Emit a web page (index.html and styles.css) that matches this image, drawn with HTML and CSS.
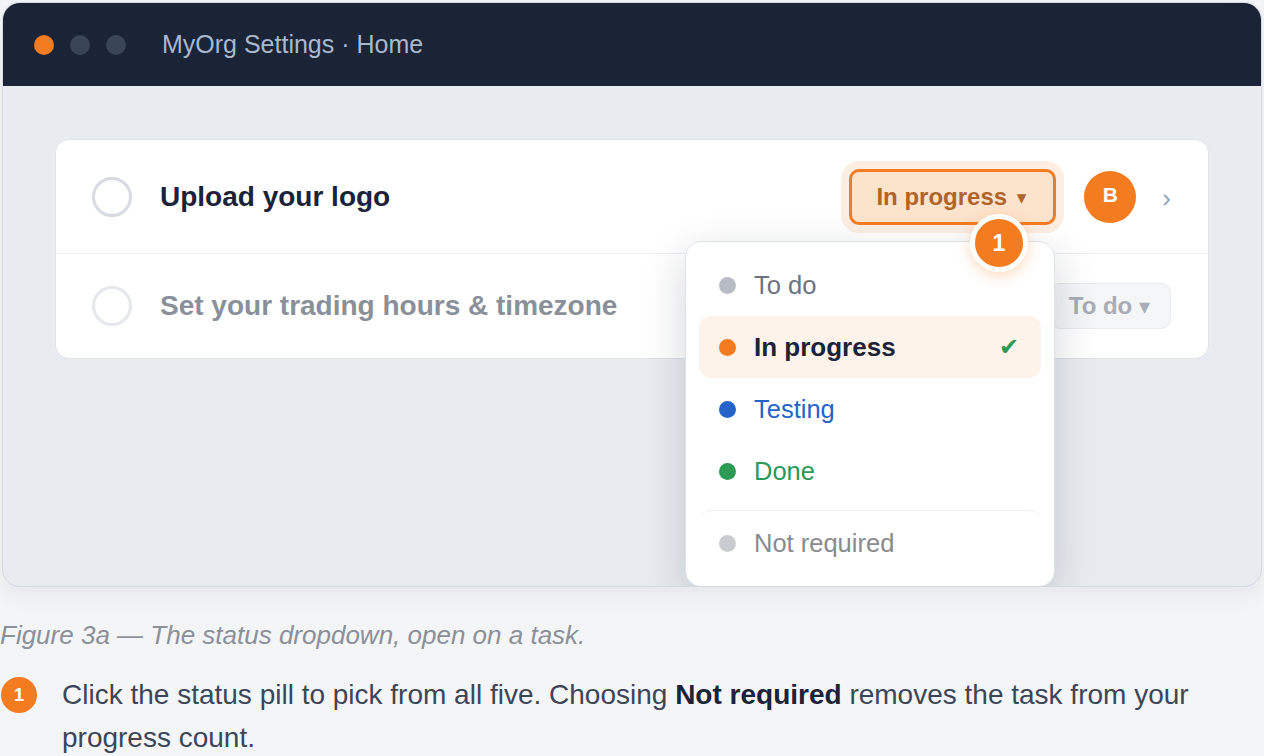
FILE: index.html
```html
<!DOCTYPE html>
<html lang="en">
<head>
<meta charset="utf-8">
<title>Status dropdown</title>
<link rel="stylesheet" href="styles.css">
</head>
<body>
<div class="window">
  <div class="titlebar">
    <span class="light light-orange"></span>
    <span class="light"></span>
    <span class="light"></span>
    <span class="title">MyOrg Settings · Home</span>
  </div>
  <div class="content">
    <div class="card">
      <div class="row row-active">
        <span class="check"></span>
        <span class="task">Upload your logo</span>
        <span class="pill-wrap">
          <span class="pill">In progress <span class="caret">▾</span></span>
        </span>
        <span class="avatar">B</span>
        <span class="chev">›</span>
      </div>
      <div class="row row-muted">
        <span class="check check-muted"></span>
        <span class="task task-muted">Set your trading hours &amp; timezone</span>
        <span class="pill-todo">To do <span class="caret-todo">▾</span></span>
      </div>

      <div class="dropdown">
        <div class="opt opt-todo"><span class="dot dot-gray"></span>To do</div>
        <div class="opt opt-active"><span class="dot dot-orange"></span>In progress<span class="tick">✔</span></div>
        <div class="opt opt-testing"><span class="dot dot-blue"></span>Testing</div>
        <div class="opt opt-done"><span class="dot dot-green"></span>Done</div>
        <div class="opt opt-nr"><span class="dot dot-light"></span>Not required</div>
      </div>
      <span class="marker">1</span>
    </div>
  </div>
</div>
<p class="caption">Figure 3a — The status dropdown, open on a task.</p>
<div class="note">
  <span class="note-badge">1</span>
  <p class="note-text"><span class="line">Click the status pill to pick from all five. Choosing <strong>Not required</strong> removes the task from your</span><span class="line">progress count.</span></p>
</div>
</body>
</html>
```

FILE: styles.css
```css
* { box-sizing: border-box; }
html, body { margin: 0; padding: 0; }
body {
  background: #f4f5f7;
  font-family: "Liberation Sans", Arial, sans-serif;
  width: 1264px;
  height: 756px;
  overflow: hidden;
}

.window {
  margin: 2px 2px 0;
  height: 585px;
  border: 1px solid #d4dae2;
  border-radius: 18px;
  overflow: hidden;
  background: #e8ecf0;
  box-shadow: 0 8px 22px rgba(30, 40, 60, 0.07);
}

.titlebar {
  height: 83px;
  background: #1b2337;
  display: flex;
  align-items: center;
  padding-left: 31px;
  gap: 16px;
}
.light {
  width: 20px;
  height: 20px;
  border-radius: 50%;
  background: #3a4558;
}
.light-orange { background: #f47c20; }
.title {
  margin-left: 20px;
  color: #a9b8cc;
  font-size: 25px;
}

.content {
  padding: 53px 52px 0;
}

.card {
  position: relative;
  background: #fff;
  border: 1px solid #dee3e9;
  border-radius: 14px;
}

.row {
  display: flex;
  align-items: center;
  padding: 0 37px 0 36px;
}
.row-active {
  height: 114px;
  border-bottom: 1px solid #eceef2;
}
.row-muted { height: 104px; }

.check {
  width: 40px;
  height: 40px;
  border-radius: 50%;
  border: 3px solid #d6dae1;
  flex: none;
}
.check-muted { border-color: #e4e7eb; }

.task {
  margin-left: 28px;
  font-size: 28px;
  font-weight: 700;
  color: #1b2337;
  flex: 1;
}
.task-muted { color: #8a9099; }

.pill-wrap {
  padding: 8px;
  border-radius: 18px;
  background: #fdeee3;
}
.pill {
  display: flex;
  align-items: center;
  height: 56px;
  padding: 0 27px 0 24px;
  border: 3px solid #f47c20;
  border-radius: 10px;
  background: #fce3cc;
  color: #b0642a;
  font-size: 24px;
  font-weight: 700;
  white-space: pre;
}
.caret {
  font-family: "DejaVu Sans", sans-serif;
  font-size: 19px;
  margin-left: 3px;
}

.avatar {
  margin-left: 20px;
  width: 52px;
  height: 52px;
  border-radius: 50%;
  background: #f47c20;
  color: #fff;
  font-weight: 700;
  font-size: 21px;
  display: flex;
  align-items: center;
  justify-content: center;
  padding-bottom: 4px;
}
.chev {
  margin-left: 26px;
  color: #94a3b8;
  font-size: 26px;
  line-height: 1;
  padding-top: 2px;
}

.pill-todo {
  display: flex;
  align-items: center;
  height: 46px;
  padding: 0 20px 0 18px;
  border: 1px solid #e8eaee;
  border-radius: 10px;
  background: #f5f6f8;
  color: #a7acb5;
  font-size: 24px;
  font-weight: 700;
  white-space: pre;
}
.caret-todo {
  font-family: "DejaVu Sans", sans-serif;
  font-size: 22px;
  margin-left: 0;
}

.dropdown {
  position: absolute;
  left: 629px;
  top: 101px;
  width: 370px;
  height: 346px;
  background: #fff;
  border: 1px solid #dde2e8;
  border-radius: 16px;
  padding: 12px 13px 8px;
  box-shadow: 0 14px 44px rgba(20, 30, 50, 0.18);
  z-index: 2;
}
.opt {
  height: 62px;
  display: flex;
  align-items: center;
  padding: 0 24px 0 20px;
  border-radius: 12px;
  font-size: 25.5px;
}
.opt-active { padding-right: 24px; }
.dot {
  width: 17px;
  height: 17px;
  border-radius: 50%;
  margin-right: 18px;
  flex: none;
}
.dot-gray { background: #b8bcc4; }
.dot-orange { background: #f47c20; }
.dot-blue { background: #2563c9; }
.dot-green { background: #2a9a55; }
.dot-light { background: #c8cbd0; }
.opt-todo { color: #6b7280; }
.opt-active {
  background: #fef3ea;
  color: #1b2337;
  font-weight: 700;
  font-size: 26px;
}
.tick {
  margin-left: auto;
  margin-right: -2px;
  color: #2a9a55;
  font-family: "DejaVu Sans", sans-serif;
  font-size: 24px;
  font-weight: 400;
}
.opt-testing { color: #2563c9; }
.opt-done { color: #2a9a55; }
.opt-nr {
  margin-top: 8px;
  height: 66px;
  border-top: 1px solid #eceef1;
  color: #8a8a8c;
}

.marker {
  position: absolute;
  left: 914px;
  top: 74px;
  width: 58px;
  height: 58px;
  border-radius: 50%;
  border: 5px solid #fff;
  background: #f47c20;
  color: #fff;
  font-size: 23px;
  font-weight: 700;
  display: flex;
  align-items: center;
  justify-content: center;
  box-shadow: 0 4px 14px rgba(244, 124, 32, 0.28);
  z-index: 3;
}

.caption {
  margin: 30px 0 0;
  font-size: 26px;
  line-height: 36px;
  font-style: italic;
  color: #8b9099;
}

.note {
  display: flex;
  align-items: flex-start;
  margin-top: 20px;
}
.note-badge {
  flex: none;
  margin: 4px 0 0 1px;
  width: 36px;
  height: 36px;
  border-radius: 50%;
  background: #f47c20;
  color: #fff;
  font-weight: 700;
  font-size: 18px;
  display: flex;
  align-items: center;
  justify-content: center;
}
.note-text {
  margin: 0 0 0 25px;
  font-size: 28px;
  line-height: 43px;
  color: #3c4657;
}
.note-text .line {
  display: block;
  white-space: nowrap;
}
.note-text strong {
  color: #1b2337;
}
```
